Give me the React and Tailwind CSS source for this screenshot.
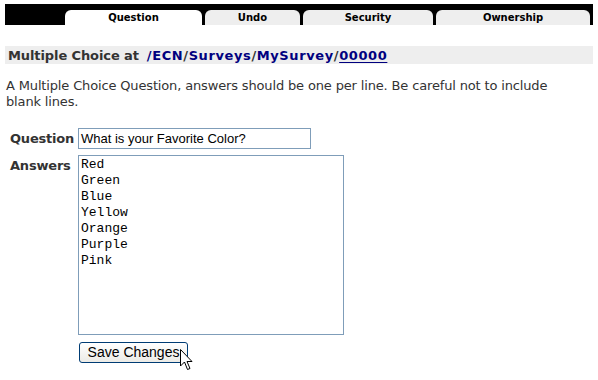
import React from "react";

const tabs = [
  { label: "Question", w: "w-[137px]", active: true },
  { label: "Undo", w: "w-[95px]" },
  { label: "Security", w: "w-[130px]" },
  { label: "Ownership", w: "w-[154px]" },
];

export default function App() {
  return (
    <div className="relative w-[598px] h-[380px] bg-white px-[5px] pt-[4px] overflow-hidden font-['DejaVu_Sans',Verdana,sans-serif] text-[#333]">
      {/* Tab bar */}
      <div className="h-[21px] bg-black flex items-end pl-[60px] gap-[3px]">
        {tabs.map((t) => (
          <div
            key={t.label}
            className={`${t.w} h-[15px] rounded-t-[6px] flex items-center justify-center text-[10px] font-bold text-black leading-none ${
              t.active ? "bg-white" : "bg-[#eeeeee]"
            }`}
          >
            {t.label}
          </div>
        ))}
      </div>

      {/* Heading */}
      <div className="mt-[21px] h-[18px] bg-[#eeeeee] flex items-center pl-[3px] text-[13px] font-bold leading-none">
        <span className="text-[#333] tracking-[-0.1px]">Multiple Choice at</span>
        <span className="ml-[8px] tracking-[0.6px]">
          <span className="text-[#00007f]">/ECN</span>
          <span className="text-[#333]">/</span>
          <span className="text-[#00007f]">Surveys</span>
          <span className="text-[#333]">/</span>
          <span className="text-[#00007f]">MySurvey</span>
          <span className="text-[#333]">/</span>
          <span className="text-[#00007f] underline underline-offset-2">00000</span>
        </span>
      </div>

      {/* Description */}
      <p className="mt-[14px] pl-[1px] text-[13px] leading-[16px] tracking-[-0.15px] w-[560px]">
        A Multiple Choice Question, answers should be one per line. Be careful not to include blank lines.
      </p>

      {/* Form */}
      <div className="mt-[18px] pl-[5px] flex flex-col gap-[6px]">
        <div className="flex items-center gap-[4px]">
          <div className="w-[64px] text-[13px] font-bold tracking-[-0.2px]">Question</div>
          <div className="w-[233px] h-[21px] border border-[#7f9db9] flex items-center pl-[2px] font-['Liberation_Sans',Arial,sans-serif] text-[13px] text-black">
            What is your Favorite Color?
          </div>
        </div>
        <div className="flex items-start gap-[4px]">
          <div className="w-[64px] text-[13px] font-bold tracking-[-0.2px] pt-[1px]">Answers</div>
          <div className="w-[266px] h-[180px] border border-[#7f9db9] pl-[2px] pt-[1px] font-['Liberation_Mono','Courier_New',monospace] text-[13px] leading-[16px] text-black">
            {["Red", "Green", "Blue", "Yellow", "Orange", "Purple", "Pink"].map((a) => (
              <div key={a}>{a}</div>
            ))}
          </div>
        </div>
        <div className="pl-[69px] mt-[1px]">
          <div className="w-[109px] h-[21px] rounded-[3px] border border-[#003c74] bg-gradient-to-b from-white to-[#ecebe6] flex items-center justify-center font-['Liberation_Sans',Arial,sans-serif] text-[14px] text-black">
            Save Changes
          </div>
        </div>
      </div>

      {/* Cursor */}
      <svg className="absolute left-[180px] top-[349px]" width="13" height="23" viewBox="0 0 13 23">
        <path d="M0.5 0.5 L0.5 17 L4.5 13 L7.5 20.5 L10 19.5 L7 12.5 L12 12.5 Z" fill="white" stroke="black" strokeWidth="1" strokeLinejoin="miter" />
      </svg>
    </div>
  );
}
